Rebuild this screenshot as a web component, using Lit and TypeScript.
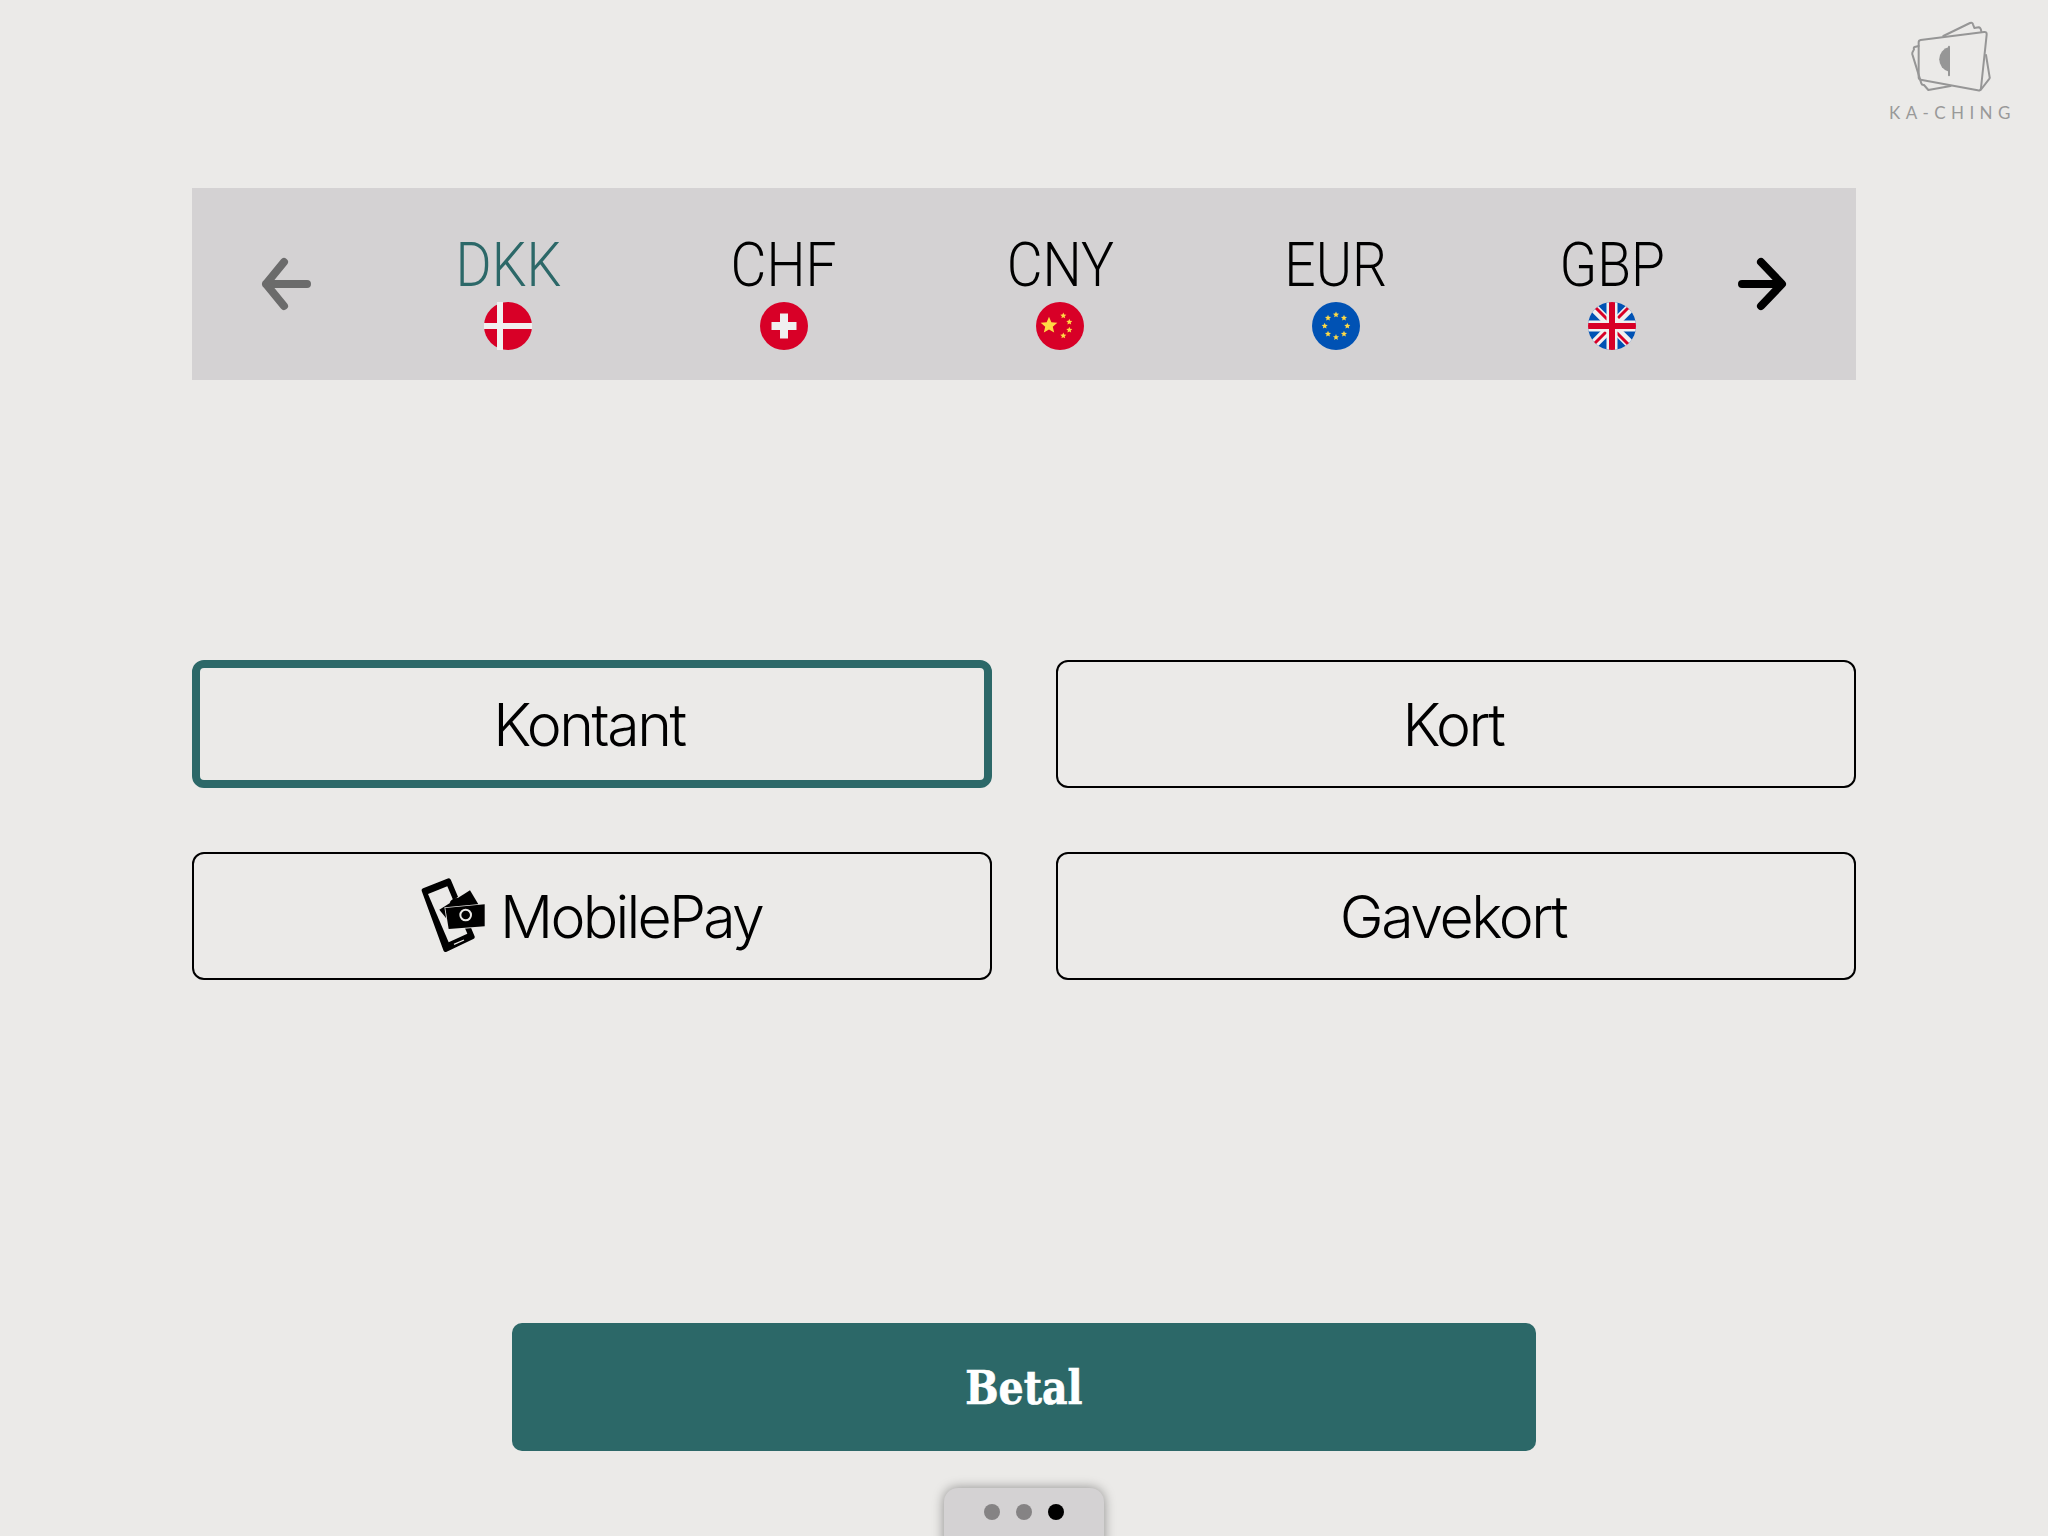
import { LitElement, html, css, svg } from "lit";
import { customElement } from "lit/decorators.js";

const star = (cx: number, cy: number, r: number, fill: string) => {
  const pts: string[] = [];
  for (let i = 0; i < 10; i++) {
    const a = -Math.PI / 2 + (i * Math.PI) / 5;
    const rad = i % 2 ? r * 0.45 : r;
    pts.push(`${(cx + rad * Math.cos(a)).toFixed(2)},${(cy + rad * Math.sin(a)).toFixed(2)}`);
  }
  return svg`<polygon points=${pts.join(" ")} fill=${fill}></polygon>`;
};

const flags: Record<string, unknown> = {
  DKK: svg`<circle cx="24" cy="24" r="24" fill="#d80027"/><rect x="13" width="6" height="48" fill="#f0f0f0"/><rect y="21" width="48" height="6" fill="#f0f0f0"/>`,
  CHF: svg`<circle cx="24" cy="24" r="24" fill="#d80027"/><rect x="20" y="11.5" width="8" height="25" fill="#f0f0f0"/><rect x="11.5" y="20" width="25" height="8" fill="#f0f0f0"/>`,
  CNY: svg`<circle cx="24" cy="24" r="24" fill="#d80027"/>${star(13, 23.5, 8.8, "#ffda44")}${star(27.3, 13.7, 3.2, "#ffda44")}${star(33.3, 20, 3.2, "#ffda44")}${star(33.3, 28, 3.2, "#ffda44")}${star(27.3, 33.7, 3.2, "#ffda44")}`,
  EUR: svg`<circle cx="24" cy="24" r="24" fill="#0052b4"/>${[0, 1, 2, 3, 4, 5, 6, 7].map((i) => star(24 + 11.3 * Math.sin((i * Math.PI) / 4), 24 - 11.3 * Math.cos((i * Math.PI) / 4), 3.2, "#ffda44"))}`,
  GBP: svg`<defs><clipPath id="uk"><circle cx="24" cy="24" r="24"/></clipPath></defs><g clip-path="url(#uk)"><rect width="48" height="48" fill="#0052b4"/><path d="M0 0L48 48M48 0L0 48" stroke="#f0f0f0" stroke-width="9"/><path d="M6 4L20 18M42 4L30 16M6 42L18 30M42 44L28 30" stroke="#d80027" stroke-width="3"/><path d="M24 0V48M0 24H48" stroke="#f0f0f0" stroke-width="11"/><path d="M24 0V48M0 24H48" stroke="#d80027" stroke-width="6"/></g>`,
};

@customElement("app-root")
export class AppRoot extends LitElement {
  static styles = css`
    :host {
      display: block;
      width: 2048px;
      height: 1536px;
      overflow: hidden;
      background: #ebeae8;
      font-family: Inter, "Liberation Sans", sans-serif;
      color: #000;
    }
    .top { height: 188px; display: flex; justify-content: flex-end; align-items: flex-start; }
    .logo { width: 188px; display: flex; flex-direction: column; }
    .logo svg { width: 188px; height: 100px; display: block; }
    .logo span {
      font-family: Lato, sans-serif; font-weight: 400; font-size: 17px; line-height: 20px;
      letter-spacing: 5.4px; color: #999; margin: 3px 0 0 29px; white-space: nowrap;
    }
    .bar {
      margin: 0 192px; height: 192px; background: #d4d2d3;
      display: grid; grid-template-columns: 178px repeat(5, 276px) 1fr; align-items: center;
    }
    .arrow { display: block; width: 56px; height: 60px; }
    .arrow.left { margin-left: 66px; color: #6b6b6b; }
    .arrow.right { margin-left: -12px; color: #000; }
    .cur { display: flex; flex-direction: column; align-items: center; padding-top: 15px; }
    .cur b {
      font-family: Roboto, sans-serif; font-weight: 300; font-size: 62px; line-height: 60px;
      transform: scaleX(0.89); margin-top: 1px;
    }
    .cur.sel b { color: #2c6868; }
    .cur svg { width: 48px; height: 48px; display: block; margin-top: 7px; }
    .grid {
      margin: 280px 192px 0; display: grid; grid-template-columns: 800px 800px; gap: 64px;
    }
    .btn {
      box-sizing: border-box; height: 128px; border: 2px solid #000; border-radius: 12px;
      display: flex; align-items: center; justify-content: center; gap: 12px; padding-right: 6px;
      font-size: 59px; font-weight: 300; letter-spacing: -2.4px;
    }
    .btn.sel { border: 8px solid #2c6868; }
    .btn svg { width: 68px; height: 76px; display: block; margin-left: 4px; }
    .btn .tight { letter-spacing: -2.75px; }
    .pay {
      margin: 343px 512px 0; height: 128px; background: #2c6868; border-radius: 10px;
      display: flex; align-items: center; justify-content: center; color: #fff;
      font-family: "DejaVu Serif", serif; font-weight: 700; font-size: 47px;
    }
    .pay span { transform: scaleX(0.84); -webkit-text-stroke: 0.7px #fff; }
    .dots {
      margin: 37px auto 0; width: 160px; height: 60px; box-sizing: border-box; padding-top: 16px;
      background: #d4d2d3; border-radius: 14px 14px 0 0; box-shadow: 0 0 12px rgba(0,0,0,.4);
      display: flex; justify-content: center; gap: 16px;
    }
    .dots i { width: 16px; height: 16px; border-radius: 50%; background: #858384; }
    .dots i.on { background: #000; }
  `;

  private arrow(cls: string) {
    return html`<svg class="arrow ${cls}" viewBox="0 0 56 60" fill="none" stroke="currentColor" stroke-width="8" stroke-linecap="round" stroke-linejoin="round">
      ${cls === "left"
        ? svg`<path d="M49 30H8M26 8L8 30L26 52"/>`
        : svg`<path d="M4 30H43M23 8L44 30L23 52"/>`}
    </svg>`;
  }

  render() {
    return html`
      <div class="top">
        <div class="logo">
          <svg viewBox="0 0 564 300" fill="none" stroke="#969696" stroke-width="6" stroke-linejoin="round" stroke-linecap="round">
            <path d="M182 120L372 96Q381 95 380 104L363 264Q362 273 353 271L182 239Q176 238 176 232V127Q176 121 182 120Z"/>
            <path d="M250 108L330 69Q337 66 339 73L343 84L356 82Q362 82 364 94"/>
            <path d="M176 138L164 141Q160 142 162 148L157 158Q156 162 158 166L184 250Q186 256 192 255L205 270L272 258"/>
            <path d="M378 165L389 232Q390 236 386 239L362 270"/>
            <path d="M267 140V226"/>
            <path d="M267 141A38 38 0 0 0 267 215Z" fill="#969696" stroke="none"/>
          </svg>
          <span>KA-CHING</span>
        </div>
      </div>
      <div class="bar">
        ${this.arrow("left")}
        ${["DKK", "CHF", "CNY", "EUR", "GBP"].map(
          (c, i) => html`<div class="cur ${i === 0 ? "sel" : ""}"><b>${c}</b><svg viewBox="0 0 48 48">${flags[c]}</svg></div>`
        )}
        ${this.arrow("right")}
      </div>
      <div class="grid">
        <div class="btn sel">Kontant</div>
        <div class="btn">Kort</div>
        <div class="btn">
          <svg viewBox="60 55 204 228">
            <path fill-rule="evenodd" d="M72 92L146 63L217 232L137 270Z" fill="#000" stroke="#000" stroke-width="14" stroke-linejoin="round"/>
            <path d="M84 103L142 80L202 222L146 248Z" fill="#ebeae8"/>
            <path d="M162 254L192 241" stroke="#ebeae8" stroke-width="4"/>
            <path d="M118 150L210 92L236 135L150 190Z" fill="#000" stroke="#ebeae8" stroke-width="5" paint-order="stroke"/>
            <path d="M152 130A24 20 0 0 1 194 128" fill="none" stroke="#000" stroke-width="7"/>
            <path d="M136 145L254 134V200L146 208Z" fill="#000" stroke="#ebeae8" stroke-width="5" paint-order="stroke"/>
            <circle cx="197" cy="166" r="16" fill="#000" stroke="#ebeae8" stroke-width="6"/>
          </svg>
          <span class="tight">MobilePay</span>
        </div>
        <div class="btn">Gavekort</div>
      </div>
      <div class="pay"><span>Betal</span></div>
      <div class="dots"><i></i><i></i><i class="on"></i></div>
    `;
  }
}
